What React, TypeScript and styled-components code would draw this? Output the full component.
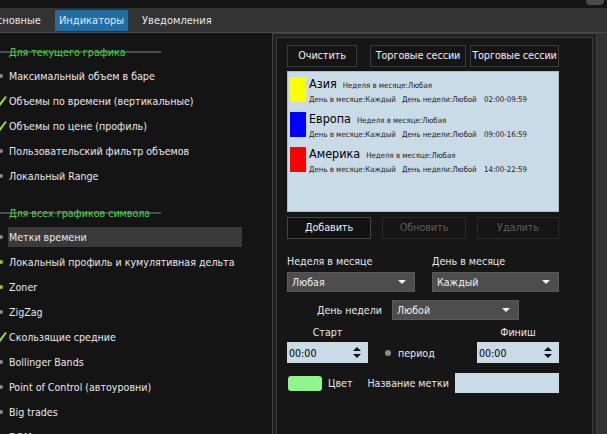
import React from "react";
import styled, { createGlobalStyle } from "styled-components";

const GlobalStyle = createGlobalStyle`
  html, body {
    margin: 0;
    padding: 0;
    background: #333;
  }
  body {
    width: 607px;
    height: 434px;
    overflow: hidden;
    font-family: "DejaVu Sans Condensed", "Liberation Sans", Arial, sans-serif;
    font-size: 10.6px;
    color: #e8e8e8;
  }
`;

type Mark = "none" | "check" | "dot";

const currentChart: { label: string; mark: Mark }[] = [
  { label: "Максимальный объем в баре", mark: "none" },
  { label: "Объемы по времени (вертикальные)", mark: "check" },
  { label: "Объемы по цене (профиль)", mark: "check" },
  { label: "Пользовательский фильтр объемов", mark: "none" },
  { label: "Локальный Range", mark: "none" },
];

const symbolCharts: { label: string; mark: Mark; selected?: boolean }[] = [
  { label: "Метки времени", mark: "none", selected: true },
  { label: "Локальный профиль и кумулятивная дельта", mark: "dot" },
  { label: "Zoner", mark: "dot" },
  { label: "ZigZag", mark: "none" },
  { label: "Скользящие средние", mark: "check" },
  { label: "Bollinger Bands", mark: "none" },
  { label: "Point of Control (автоуровни)", mark: "none" },
  { label: "Big trades", mark: "none" },
  { label: "DOM", mark: "none" },
];

const sessions = [
  { name: "Азия", color: "#ffff00", time: "02:00-09:59" },
  { name: "Европа", color: "#0000ff", time: "09:00-16:59" },
  { name: "Америка", color: "#ff0000", time: "14:00-22:59" },
];

function App() {
  return (
    <Window>
      <GlobalStyle />
      <TitleStrip>
        <WinButton />
      </TitleStrip>
      <TabBar>
        <Tab $first>Основные</Tab>
        <Tab $active>Индикаторы</Tab>
        <Tab>Уведомления</Tab>
      </TabBar>
      <Main>
        <LeftPanel>
          <GroupHeader>
            <GroupTitle>Для текущего графика</GroupTitle>
          </GroupHeader>
          {currentChart.map((it) => (
            <Item key={it.label}>
              <Bullet mark={it.mark} />
              <ItemLabel>{it.label}</ItemLabel>
            </Item>
          ))}
          <GroupHeader $second>
            <GroupTitle>Для всех графиков символа</GroupTitle>
          </GroupHeader>
          {symbolCharts.map((it) => (
            <Item key={it.label}>
              <Bullet mark={it.mark} />
              <ItemLabel $selected={it.selected}>{it.label}</ItemLabel>
            </Item>
          ))}
        </LeftPanel>
        <RightOuter>
          <RightInner>
            <TopButtons>
              <Button $w={70} $gapRight={13}>Очистить</Button>
              <Button $w={96} $gapRight={4}>Торговые сессии</Button>
              <Button $w={89}>Торговые сессии</Button>
            </TopButtons>
            <SessionList>
              {sessions.map((s) => (
                <SessionRow key={s.name}>
                  <Swatch $color={s.color} />
                  <SessionInfo>
                    <SessionHead>
                      <SessionName>{s.name}</SessionName>
                      <Detail>Неделя в месяце:Любая</Detail>
                    </SessionHead>
                    <SessionLine>
                      <Detail $w={93}>День в месяце:Каждый</Detail>
                      <Detail $w={82}>День недели:Любой</Detail>
                      <Detail>{s.time}</Detail>
                    </SessionLine>
                  </SessionInfo>
                </SessionRow>
              ))}
            </SessionList>
            <EditButtons>
              <Button $w={84} $strong>Добавить</Button>
              <Button $w={84} $disabled>Обновить</Button>
              <Button $w={82} $disabled>Удалить</Button>
            </EditButtons>
            <SelectGrid>
              <FieldLabel>Неделя в месяце</FieldLabel>
              <FieldLabel>День в месяце</FieldLabel>
              <Select>
                Любая
                <Caret />
              </Select>
              <Select>
                Каждый
                <Caret />
              </Select>
            </SelectGrid>
            <DayRow>
              <DayLabel>День недели</DayLabel>
              <Select $w={127}>
                Любой
                <Caret />
              </Select>
            </DayRow>
            <TimeGrid>
              <CenterLabel>Старт</CenterLabel>
              <span />
              <CenterLabel>Финиш</CenterLabel>
              <Spin>
                00:00
                <SpinArrows>
                  <ArrowUp />
                  <ArrowDown />
                </SpinArrows>
              </Spin>
              <PeriodOption>
                <Radio />
                период
              </PeriodOption>
              <Spin>
                00:00
                <SpinArrows>
                  <ArrowUp />
                  <ArrowDown />
                </SpinArrows>
              </Spin>
            </TimeGrid>
            <ColorRow>
              <ColorChip />
              <RowText>Цвет</RowText>
              <RowText $ml={9}>Название метки</RowText>
              <NameInput />
            </ColorRow>
          </RightInner>
        </RightOuter>
      </Main>
    </Window>
  );
}

function Bullet({ mark }: { mark: Mark }) {
  return (
    <BulletBox>
      {mark === "check" ? (
        <svg width="8" height="12" viewBox="0 0 8 12">
          <path d="M-2 7 L0 9.5 L6 1.5" fill="none" stroke="#9bdc3c" strokeWidth="2" />
        </svg>
      ) : (
        <Dot $on={mark === "dot"} />
      )}
    </BulletBox>
  );
}

export default App;

const Window = styled.div`
  width: 607px;
  height: 434px;
  display: flex;
  flex-direction: column;
  overflow: hidden;
`;

const TitleStrip = styled.div`
  height: 8px;
  background: #151515;
  display: flex;
  justify-content: flex-end;
`;

const WinButton = styled.div`
  width: 18px;
  height: 5px;
  margin-right: 3px;
  background: #4a4a4a;
  border-radius: 0 0 4px 4px;
`;

const TabBar = styled.div`
  height: 24px;
  background: #333;
  border-bottom: 1px solid #494949;
  display: flex;
  align-items: center;
  gap: 10px;
`;

const Tab = styled.div<{ $active?: boolean; $first?: boolean }>`
  height: 21px;
  line-height: 21px;
  padding: 0 4px;
  font-size: 11px;
  white-space: nowrap;
  color: #e6e6e6;
  background: ${(p) => (p.$active ? "#1f6ea6" : "transparent")};
  margin-left: ${(p) => (p.$first ? "-15px" : "0")};
`;

const Main = styled.div`
  flex: 1;
  display: flex;
  min-height: 0;
`;

const LeftPanel = styled.div`
  width: 272px;
  flex-shrink: 0;
  background: #141414;
  padding-top: 12px;
  overflow: hidden;
`;

const GroupHeader = styled.div<{ $second?: boolean }>`
  width: 161px;
  height: 14px;
  margin-top: ${(p) => (p.$second ? "18px" : "0")};
  margin-bottom: 4px;
  display: flex;
  align-items: center;
  background: linear-gradient(#4c4c4c, #4c4c4c) 0 50% / 100% 2px no-repeat;
`;

const GroupTitle = styled.span`
  margin-left: 9px;
  max-width: 140px;
  overflow: hidden;
  white-space: nowrap;
  color: #3fd83f;
  line-height: 14px;
`;

const Item = styled.div`
  height: 25px;
  display: flex;
  align-items: center;
`;

const BulletBox = styled.div`
  width: 8px;
  flex-shrink: 0;
  display: flex;
  align-items: center;
`;

const Dot = styled.div<{ $on?: boolean }>`
  width: 4px;
  height: 4px;
  margin-left: -1px;
  border-radius: 50%;
  background: ${(p) => (p.$on ? "#8cc63a" : "#8a8a8a")};
`;

const ItemLabel = styled.div<{ $selected?: boolean }>`
  width: 233px;
  height: 20px;
  line-height: 20px;
  padding-left: 1px;
  white-space: nowrap;
  color: #e8e8e8;
  background: ${(p) => (p.$selected ? "#3a3a3a" : "transparent")};
`;

const RightOuter = styled.div`
  flex: 1;
  margin-right: 10px;
  padding: 3px 3px 0 3px;
  background: #222;
  border: 1px solid #404040;
  border-bottom: none;
  display: flex;
`;

const RightInner = styled.div`
  flex: 1;
  background: #161616;
  border: 1px solid #3a3a3a;
  border-bottom: none;
  padding: 7px 0 0 10px;
  display: flex;
  flex-direction: column;
`;

const TopButtons = styled.div`
  display: flex;
`;

const Button = styled.div<{
  $w: number;
  $gapRight?: number;
  $strong?: boolean;
  $disabled?: boolean;
}>`
  width: ${(p) => p.$w}px;
  height: 22px;
  line-height: 20px;
  box-sizing: border-box;
  margin-right: ${(p) => p.$gapRight ?? 0}px;
  border: 1px solid ${(p) => (p.$disabled ? "#2a2a2a" : p.$strong ? "#444" : "#3a3a3a")};
  background: ${(p) => (p.$strong ? "#111" : "#151515")};
  color: ${(p) => (p.$disabled ? "#5c5c5c" : "#eeeeee")};
  font-size: 10.8px;
  letter-spacing: -0.1px;
  text-align: center;
  white-space: nowrap;
  overflow: hidden;
`;

const SessionList = styled.div`
  width: 272px;
  height: 141px;
  box-sizing: border-box;
  margin-top: 4px;
  padding: 5px 2px;
  background: #c9dbe6;
  border: 1px solid #a9bcc8;
  display: flex;
  flex-direction: column;
  gap: 7px;
`;

const SessionRow = styled.div`
  display: flex;
  gap: 3px;
`;

const Swatch = styled.div<{ $color: string }>`
  width: 16px;
  height: 25px;
  background: ${(p) => p.$color};
`;

const SessionInfo = styled.div`
  display: flex;
  flex-direction: column;
  color: #111;
`;

const SessionHead = styled.div`
  height: 14px;
  display: flex;
  align-items: baseline;
  gap: 6px;
`;

const SessionName = styled.span`
  font-size: 12.5px;
  line-height: 14px;
  color: #000;
`;

const SessionLine = styled.div`
  height: 12px;
  margin-top: 2px;
  display: flex;
  align-items: center;
`;

const Detail = styled.span<{ $w?: number }>`
  font-size: 7.8px;
  color: #222;
  white-space: nowrap;
  width: ${(p) => (p.$w ? `${p.$w}px` : "auto")};
`;

const EditButtons = styled.div`
  width: 272px;
  margin-top: 5px;
  display: flex;
  justify-content: space-between;
`;

const SelectGrid = styled.div`
  width: 272px;
  margin-top: 15px;
  display: grid;
  grid-template-columns: 128px 127px;
  column-gap: 17px;
  row-gap: 4px;
`;

const FieldLabel = styled.div`
  line-height: 14px;
  white-space: nowrap;
  color: #e8e8e8;
`;

const DayLabel = styled(FieldLabel)`
  width: 70px;
  text-align: right;
`;

const Select = styled.div<{ $w?: number }>`
  width: ${(p) => (p.$w ? `${p.$w}px` : "auto")};
  height: 20px;
  line-height: 20px;
  padding-left: 4px;
  box-sizing: border-box;
  background: #4d4d4d;
  border: 1px solid #5a5a5a;
  display: flex;
  align-items: center;
  justify-content: space-between;
  color: #f0f0f0;
`;

const Caret = styled.span`
  width: 0;
  height: 0;
  margin-right: 8px;
  border-left: 4px solid transparent;
  border-right: 4px solid transparent;
  border-top: 4px solid #f0f0f0;
`;

const DayRow = styled.div`
  margin-top: 8px;
  padding-left: 25px;
  display: flex;
  align-items: center;
  gap: 10px;
`;

const TimeGrid = styled.div`
  width: 272px;
  margin-top: 5px;
  display: grid;
  grid-template-columns: 81px 1fr 82px;
  row-gap: 3px;
  align-items: center;
`;

const CenterLabel = styled.div`
  text-align: center;
  line-height: 14px;
`;

const Spin = styled.div`
  height: 21px;
  padding-left: 2px;
  background: #c9dbe6;
  color: #000;
  display: flex;
  align-items: center;
  justify-content: space-between;
`;

const SpinArrows = styled.div`
  margin-right: 7px;
  display: flex;
  flex-direction: column;
  gap: 3px;
`;

const ArrowUp = styled.span`
  width: 0;
  height: 0;
  border-left: 4px solid transparent;
  border-right: 4px solid transparent;
  border-bottom: 4px solid #111;
`;

const ArrowDown = styled(ArrowUp)`
  border-bottom: none;
  border-top: 4px solid #111;
`;

const PeriodOption = styled.div`
  padding-left: 17px;
  display: flex;
  align-items: center;
  gap: 7px;
`;

const Radio = styled.span`
  width: 6px;
  height: 6px;
  border-radius: 50%;
  background: #8a8a8a;
`;

const ColorRow = styled.div`
  width: 271px;
  margin-top: 10px;
  padding-left: 1px;
  display: flex;
  align-items: center;
  gap: 6px;
`;

const ColorChip = styled.span`
  width: 34px;
  height: 15px;
  flex-shrink: 0;
  border-radius: 3px;
  background: #8ff58f;
`;

const RowText = styled.span<{ $ml?: number }>`
  white-space: nowrap;
  flex-shrink: 0;
  margin-left: ${(p) => p.$ml ?? 0}px;
`;

const NameInput = styled.div`
  width: 104px;
  height: 20px;
  flex-shrink: 0;
  margin-left: auto;
  background: #c9dbe6;
`;
